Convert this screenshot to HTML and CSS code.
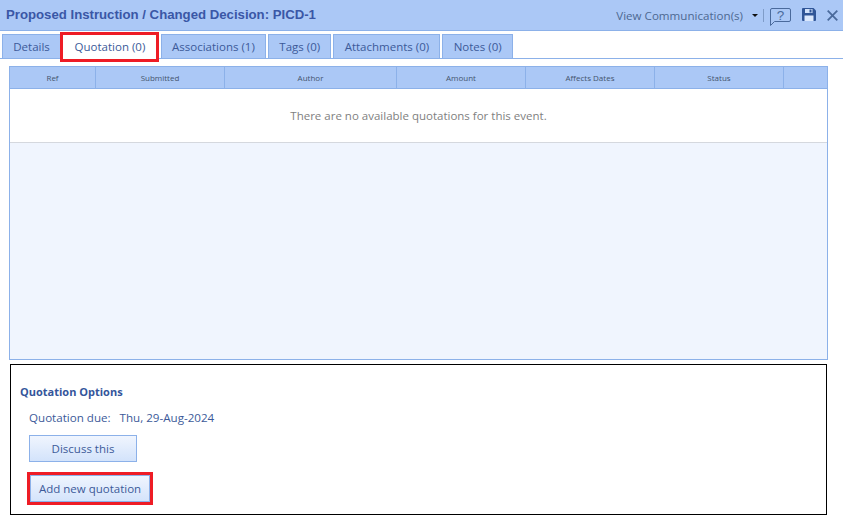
FILE: index.html
```html
<!DOCTYPE html>
<html lang="en">
<head>
<meta charset="utf-8">
<title>PICD-1</title>
<link rel="stylesheet" href="styles.css">
</head>
<body>
<header class="titlebar">
  <h1 class="title">Proposed Instruction / Changed Decision: PICD-1</h1>
  <div class="tools">
    <span class="view">View Communication(s)</span>
    <span class="caret"></span>
    <span class="sep"></span>
    <svg class="ico-help" width="21" height="18" viewBox="0 0 21 18"><path d="M2 .5h17a1.500 1.500 0 0 1 1.500 1.500v10a1.500 1.500 0 0 1-1.500 1.500H4.500L.5 17.500V2A1.500 1.500 0 0 1 2 .5z" fill="none" stroke="#4a6a9c" stroke-width="1"/><text x="10.500" y="12" class="q">?</text></svg>
    <svg class="ico-save" width="14" height="13" viewBox="0 0 14 13"><path d="M0 1a1 1 0 0 1 1-1h10.500L14 2.500V12a1 1 0 0 1-1 1H1a1 1 0 0 1-1-1z" fill="#2f5597"/><rect x="3" y="1" width="7.500" height="4" fill="#cfe0fa"/><rect x="7.500" y="1.500" width="2" height="3" fill="#2f5597"/><rect x="2.500" y="7.500" width="9" height="5.500" fill="#dbe8fc"/></svg>
    <svg class="ico-close" width="11" height="11" viewBox="0 0 11 11"><path d="M.7.7l9.600 9.600M10.300.7L.7 10.300" stroke="#4a6a9c" stroke-width="1.800" fill="none"/></svg>
  </div>
</header>
<nav class="tabs">
  <a class="tab">Details</a>
  <a class="tab active">Quotation (0)</a>
  <a class="tab">Associations (1)</a>
  <a class="tab">Tags (0)</a>
  <a class="tab">Attachments (0)</a>
  <a class="tab">Notes (0)</a>
</nav>
<section class="grid">
  <div class="grid-head">
    <div class="c c1">Ref</div>
    <div class="c c2">Submitted</div>
    <div class="c c3">Author</div>
    <div class="c c2">Amount</div>
    <div class="c c2">Affects Dates</div>
    <div class="c c2">Status</div>
    <div class="c c7"></div>
  </div>
  <div class="grid-empty">There are no available quotations for this event.</div>
  <div class="grid-fill"></div>
</section>
<section class="options">
  <h2 class="opt-title">Quotation Options</h2>
  <div class="due"><span>Quotation due:</span><span>Thu, 29-Aug-2024</span></div>
  <button class="btn discuss">Discuss this</button>
  <button class="btn add">Add new quotation</button>
</section>
</body>
</html>
```
FILE: styles.css
```css
* { box-sizing: border-box; }
html, body { height: 100%; }
body {
  margin: 0;
  background: #fff;
  overflow: hidden;
  font-family: "Open Sans", "Noto Sans", sans-serif;
  font-size: 12px;
  color: #3c5a99;
}
.titlebar {
  height: 31px;
  background: #abc8f6;
  border-bottom: 1px solid #8cb1e9;
  display: flex;
  align-items: center;
  justify-content: space-between;
  padding: 0 5px 0 6px;
}
.title {
  margin: 0 0 1px;
  font-family: "Liberation Sans", Arial, sans-serif;
  font-weight: 700;
  font-size: 13.200px;
  color: #3a57a6;
}
.tools { display: flex; align-items: center; }
.view { font-size: 11.600px; color: #4d6892; }
.caret {
  width: 0; height: 0;
  margin: 0 5px 0 9px;
  border-left: 3px solid transparent;
  border-right: 3px solid transparent;
  border-top: 3px solid #111;
}
.sep { width: 1px; height: 13px; background: #7f9cc8; margin-right: 6px; }
.ico-help { margin-right: 11px; margin-top: 3px; }
.ico-help .q { font-family: "Liberation Sans", sans-serif; font-size: 13.500px; fill: #4a6a9c; text-anchor: middle; }
.ico-save { margin-right: 11px; margin-top: -1px; }
.ico-close { margin-top: 1px; }
.tabs {
  height: 28px;
  padding: 3px 0 0 2px;
  display: flex;
  gap: 2px;
  border-bottom: 1px solid #8cb1e9;
  align-items: flex-start;
}
.tab {
  height: 24px;
  padding: 0 10.250px;
  background: #abc8f6;
  border: 1px solid #8cb1e9;
  border-bottom: 0;
  display: flex;
  align-items: center;
  font-size: 11.500px;
  color: #3c5a99;
}
.tab.active {
  height: 30px;
  margin: -2px 0 0 -3.500px;
  padding: 0 10.500px 1px 12px;
  background: #fff;
  border: 3px solid #ee1c25;
  position: relative;
}
.grid {
  margin: 7px 15px 0 9px;
  height: 294px;
  border: 1px solid #8cb1e9;
  display: flex;
  flex-direction: column;
  background: #f0f5fe;
}
.grid-head {
  display: flex;
  height: 22px;
  background: #abc8f6;
  border-bottom: 1px solid #8cb1e9;
}
.c {
  border-right: 1px solid #8cb1e9;
  display: flex;
  align-items: center;
  justify-content: center;
  font-size: 8px;
  color: #44546e;
}
.c1 { width: 86px; }
.c2 { width: 129px; }
.c3 { width: 172px; }
.c7 { flex: 1; border-right: 0; }
.grid-empty {
  height: 54px;
  background: #fff;
  border-bottom: 1px solid #d5d8de;
  display: flex;
  align-items: center;
  justify-content: center;
  font-size: 11.500px;
  color: #7f7f7f;
}
.grid-fill { flex: 1; }
.options {
  margin: 4px 16px 0 10px;
  height: 151px;
  border: 1px solid #000;
  padding: 19px 0 0 9px;
}
.opt-title {
  margin: 0;
  font-size: 11px;
  font-weight: 700;
  line-height: 15px;
  color: #34559b;
}
.due {
  margin: 11px 0 0 9px;
  display: flex;
  gap: 9px;
  font-size: 11.600px;
  line-height: 16px;
  color: #3c5a99;
}
.btn {
  display: block;
  font-family: inherit;
  font-size: 11.500px;
  color: #3c5a99;
  background: linear-gradient(#f0f5fe, #d3e3fb);
  border: 1px solid #8cb1e9;
  padding: 0;
}
.discuss { margin: 9px 0 0 9px; width: 108px; height: 27px; }
.add { margin: 10px 0 0 7px; width: 126px; height: 33px; border: 3px solid #ee1c25; box-shadow: inset 0 0 0 1px #8cb1e9; }
```
